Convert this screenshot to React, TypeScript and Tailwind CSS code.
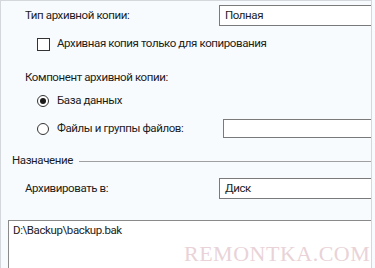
const Radio = ({ checked }: { checked?: boolean }) => (
  <span className="flex h-[12px] w-[12px] shrink-0 items-center justify-center rounded-full border border-[#333] bg-white">
    {checked && <span className="h-[6px] w-[6px] rounded-full bg-[#1a1a1a]" />}
  </span>
);

const Combo = ({ value }: { value: string }) => (
  <div className="flex h-full flex-1 items-center border border-r-0 border-[#7a7a7a] bg-white pl-[5px]">
    {value}
  </div>
);

export default function App() {
  return (
    <div
      className="relative h-[268px] w-[375px] overflow-hidden bg-[#f8fbfd] text-[11.5px] leading-none tracking-[-0.4px] text-[#1c1c1c]"
      style={{ fontFamily: 'Roboto, "Noto Sans", sans-serif' }}
    >
      <div className="flex h-full w-[372px] flex-col border-r border-l border-t border-[#d4d8dc]">
        {/* Тип */}
        <div className="mt-[4px] flex h-[21px] items-center">
          <span className="w-[218px] pl-[24px]">Тип архивной копии:</span>
          <Combo value="Полная" />
        </div>

        <div className="mt-[11px] flex h-[14px] items-center gap-[7px] pl-[36px]">
          <span className="h-[13px] w-[13px] border border-[#333] bg-white" />
          <span>Архивная копия только для копирования</span>
        </div>

        <div className="mt-[19px] flex h-[16px] items-center pl-[24px]">
          Компонент архивной копии:
        </div>

        <div className="mt-[8px] flex h-[14px] items-center gap-[8px] pl-[36px]">
          <Radio checked />
          <span>База данных</span>
        </div>

        <div className="mt-[11px] flex h-[19px] items-center">
          <div className="flex w-[222px] items-center gap-[8px] pl-[36px]">
            <Radio />
            <span>Файлы и группы файлов:</span>
          </div>
          <div className="h-full flex-1 border border-r-0 border-[#7a7a7a] bg-white" />
        </div>

        {/* Назначение */}
        <div className="mt-[16px] flex h-[14px] items-center gap-[6px] pl-[11px]">
          <span>Назначение</span>
          <span className="h-px flex-1 bg-[#a0a0a0]" />
        </div>

        <div className="mt-[10px] flex h-[21px] items-center">
          <span className="w-[218px] pl-[24px]">Архивировать в:</span>
          <Combo value="Диск" />
        </div>

        <div className="mt-[21px] ml-[7px] flex-1 border-l border-t border-[#8a8a8a] bg-white px-[4px] pt-[4px]">
          D:\Backup\backup.bak
        </div>
      </div>

      <div
        className="absolute left-[184px] top-[243px] text-[22px] tracking-[0.5px] text-[#e9d3d8]"
        style={{ fontFamily: '"Liberation Serif", serif' }}
      >
        REMONTKA.COM
      </div>
    </div>
  );
}
